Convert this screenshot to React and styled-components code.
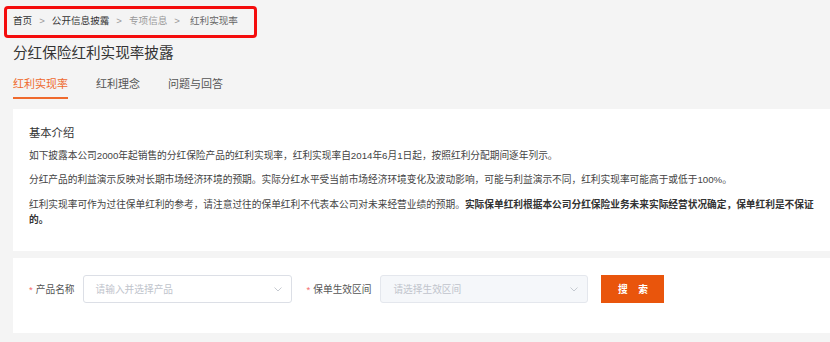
import styled, { createGlobalStyle } from "styled-components";

const GlobalStyle = createGlobalStyle`
  html, body {
    margin: 0;
    padding: 0;
    overflow: hidden;
    background: #f4f4f4;
  }
  body {
    font-family: "Liberation Sans", "Noto Sans CJK SC", sans-serif;
    color: #333;
  }
`;

const Page = styled.div`
  position: relative;
  width: 841px;
  box-sizing: border-box;
  padding-left: 13px;
`;

const Breadcrumb = styled.div`
  display: flex;
  align-items: center;
  height: 40px;
  font-size: 9.6px;
`;

const Crumb = styled.span`
  color: ${(p) => p.color || "#333"};
  padding-left: ${(p) => (p.last ? "3px" : "0")};
`;

const Sep = styled.span`
  color: #999;
  margin: 0 7px;
`;

const Highlight = styled.div`
  position: absolute;
  left: 4px;
  top: 6px;
  width: 253px;
  height: 32px;
  box-sizing: border-box;
  border: 3px solid #f40c0c;
  border-radius: 4px;
  pointer-events: none;
`;

const Title = styled.h1`
  margin: 3px 0 0;
  font-size: 14.6px;
  line-height: 20px;
  font-weight: 400;
  color: #333;
`;

const Tabs = styled.div`
  display: flex;
  gap: 28px;
  margin-bottom: 10px;
`;

const Tab = styled.div`
  padding-top: 13px;
  padding-bottom: 5px;
  font-size: 11px;
  line-height: 16px;
  color: ${(p) => (p.active ? "#ef6a2e" : "#555")};
  border-bottom: 2px solid ${(p) => (p.active ? "#ef6a2e" : "transparent")};
`;

const Card = styled.div`
  background: #fff;
  padding: ${(p) => p.pad};
  margin-bottom: 7px;
`;

const Heading = styled.h2`
  margin: 0 0 6.5px;
  font-size: 11.3px;
  line-height: 16px;
  font-weight: 400;
  color: #333;
`;

const Para = styled.p`
  margin: 0 0 9.5px;
  font-size: 9.7px;
  line-height: 15px;
  color: #444;
  &:last-child {
    margin-bottom: 0;
  }
  b {
    color: #333;
    font-weight: 700;
  }
`;

const Form = styled.div`
  display: flex;
  align-items: center;
`;

const Label = styled.label`
  font-size: 9.7px;
  color: #555;
  margin-right: ${(p) => (p.offset ? "9px" : "8px")};
  margin-left: ${(p) => p.offset || "0"};
  &::before {
    content: "*";
    color: #f56c6c;
    margin-right: 3px;
  }
`;

const Select = styled.div`
  display: flex;
  align-items: center;
  justify-content: space-between;
  width: ${(p) => p.w}px;
  height: 28px;
  box-sizing: border-box;
  padding: 0 9px 0 12px;
  border: 1px solid ${(p) => (p.disabled ? "#e4e7ed" : "#dcdfe6")};
  border-radius: 3px;
  background: ${(p) => (p.disabled ? "#f5f7fa" : "#fff")};
  font-size: 9.7px;
  color: #c0c4cc;
`;

const Button = styled.button`
  margin-left: 13px;
  width: 63px;
  height: 28px;
  border: none;
  background: #e9550c;
  color: #fff;
  font-family: inherit;
  font-size: 9.7px;
  font-weight: 700;
  letter-spacing: 4px;
  padding: 0 0 0 4px;
`;

const Chevron = () => (
  <svg width="8" height="5" viewBox="0 0 8 5" fill="none">
    <path d="M0.5 0.5 L4 4 L7.5 0.5" stroke="#c0c4cc" strokeWidth="0.9" />
  </svg>
);

export default function App() {
  return (
    <Page>
      <GlobalStyle />
      <Breadcrumb>
        <Crumb>首页</Crumb>
        <Sep>&gt;</Sep>
        <Crumb>公开信息披露</Crumb>
        <Sep>&gt;</Sep>
        <Crumb color="#999">专项信息</Crumb>
        <Sep>&gt;</Sep>
        <Crumb color="#666" last>
          红利实现率
        </Crumb>
      </Breadcrumb>
      <Highlight />
      <Title>分红保险红利实现率披露</Title>
      <Tabs>
        <Tab active>红利实现率</Tab>
        <Tab>红利理念</Tab>
        <Tab>问题与回答</Tab>
      </Tabs>
      <Card pad="16px 16px 24.5px 16px">
        <Heading>基本介绍</Heading>
        <Para>
          如下披露本公司2000年起销售的分红保险产品的红利实现率，红利实现率自2014年6月1日起，按照红利分配期间逐年列示。
        </Para>
        <Para>
          分红产品的利益演示反映对长期市场经济环境的预期。实际分红水平受当前市场经济环境变化及波动影响，可能与利益演示不同，红利实现率可能高于或低于100%。
        </Para>
        <Para>
          红利实现率可作为过往保单红利的参考，请注意过往的保单红利不代表本公司对未来经营业绩的预期。
          <b>实际保单红利根据本公司分红保险业务未来实际经营状况确定，保单红利是不保证的。</b>
        </Para>
      </Card>
      <Card pad="17px 16px 30px 16px">
        <Form>
          <Label>产品名称</Label>
          <Select w={209}>
            <span>请输入并选择产品</span>
            <Chevron />
          </Select>
          <Label offset="15px">保单生效区间</Label>
          <Select w={208} disabled>
            <span>请选择生效区间</span>
            <Chevron />
          </Select>
          <Button>搜 索</Button>
        </Form>
      </Card>
    </Page>
  );
}
